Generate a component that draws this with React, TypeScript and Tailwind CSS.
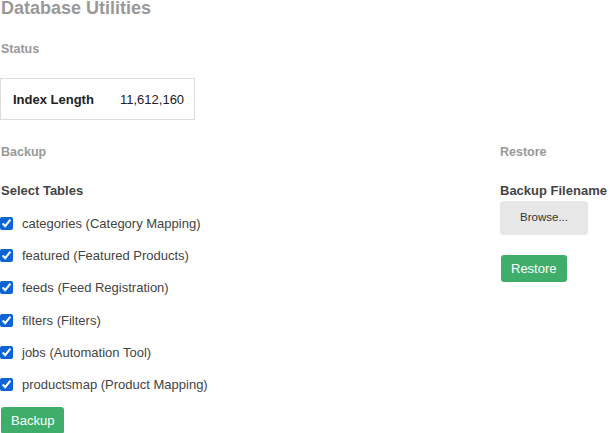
import React, { useState } from 'react';

const tables = [
    { key: 'categories', label: 'categories (Category Mapping)' },
    { key: 'featured', label: 'featured (Featured Products)' },
    { key: 'feeds', label: 'feeds (Feed Registration)' },
    { key: 'filters', label: 'filters (Filters)' },
    { key: 'jobs', label: 'jobs (Automation Tool)' },
    { key: 'productsmap', label: 'productsmap (Product Mapping)' },
];

const App: React.FC = () => {
    const [checked, setChecked] = useState<Record<string, boolean>>(
        Object.fromEntries(tables.map(t => [t.key, true]))
    );

    const toggle = (key: string) => setChecked(prev => ({ ...prev, [key]: !prev[key] }));

    return (
        <div className="font-['Liberation_Sans',Arial,sans-serif] text-[#333] overflow-hidden h-[433px]">
            <h2 className="text-[18px] leading-[20px] font-bold text-[#999] -mt-[2px] pl-[1px]">Database Utilities</h2>

            <h4 className="mt-[24px] text-[12.5px] leading-[15px] font-bold text-[#999] pl-[1px]">Status</h4>
            <div className="mt-[21px] w-[195px] h-[42px] border border-[#ddd] flex items-center pl-[12px] text-[13px] leading-[15px]">
                <span className="w-[107px] font-bold text-[#222]">Index Length</span>
                <span className="text-[#222]">11,612,160</span>
            </div>

            <div className="flex mt-[25px]">
                <div className="w-[500px]">
                    <h4 className="text-[12.5px] leading-[15px] font-bold text-[#999] pl-[1px]">Backup</h4>
                    <h5 className="mt-[23px] text-[13px] leading-[15px] font-bold text-[#444] pl-[1px]">Select Tables</h5>
                    <div className="mt-[9px] flex flex-col">
                        {tables.map(t => (
                            <label key={t.key} className="h-[32.3px] flex items-center gap-[9px] text-[13px] leading-[15px] text-[#444]">
                                <input
                                    type="checkbox"
                                    checked={checked[t.key]}
                                    onChange={() => toggle(t.key)}
                                    className="m-0 w-[13px] h-[13px] accent-[#0b63d6]"
                                />
                                <span>{t.label}</span>
                            </label>
                        ))}
                    </div>
                    <button className="mt-[6px] ml-[1px] h-[27px] px-[10px] rounded-[3px] bg-[#3fae6a] text-white text-[13px] leading-[15px]">
                        Backup
                    </button>
                </div>
                <div className="flex-1 whitespace-nowrap">
                    <h4 className="text-[12.5px] leading-[15px] font-bold text-[#999]">Restore</h4>
                    <h5 className="mt-[23px] text-[13px] leading-[15px] font-bold text-[#444]">Backup Filename</h5>
                    <button className="mt-[3px] block w-[88px] h-[34px] rounded-[4px] bg-[#e7e7e7] text-[11.5px] text-[#333]">
                        Browse...
                    </button>
                    <button className="mt-[20px] block ml-[1px] h-[27px] px-[10px] rounded-[3px] bg-[#3fae6a] text-white text-[13px] leading-[15px]">
                        Restore
                    </button>
                </div>
            </div>
        </div>
    );
};

export default App;
